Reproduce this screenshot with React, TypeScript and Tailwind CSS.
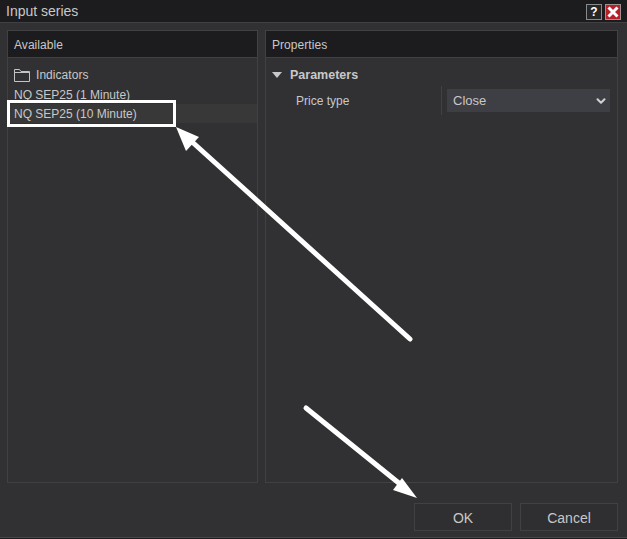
import React from 'react';
import { ChevronDown } from 'lucide-react';

const Panel: React.FC<{ title: string; className: string; children: React.ReactNode }> = ({ title, className, children }) => (
  <section className={`flex flex-col border border-[#414143] ${className}`}>
    <header className="flex h-[27px] items-center border-b border-[#414143] bg-[#1c1c1e] px-[6px] pt-px text-[12px] tracking-[0.05px] text-[#c8c8c8]">{title}</header>
    {children}
  </section>
);

const FolderIcon = () => (
  <svg width="16" height="14" viewBox="0 0 16 14" fill="none" stroke="#c4c4c4" strokeWidth="1">
    <path d="M0.5 13.5V1.5H5.5L7 3.5H15.5V13.5Z" />
    <path d="M0.5 4.5H15.5" />
  </svg>
);

const App: React.FC = () => {
  return (
    <div className="relative flex h-[539px] w-[627px] flex-col overflow-hidden bg-[#313133] font-['Liberation_Sans',Arial,sans-serif]">
      <div className="flex h-[23px] shrink-0 items-center justify-between border-b border-[#414143] bg-[#1c1c1e] px-[6px] text-[14px] text-[#c8c8c8]">
        <span>Input series</span>
        <div className="flex gap-[3px] pt-px">
          <span className="flex h-[16px] w-[16px] items-center justify-center border border-[#8a8a8a] bg-[#262626] text-[12px] font-bold text-white">?</span>
          <span className="flex h-[16px] w-[16px] items-center justify-center border border-[#a09090] bg-[#b5202a]">
            <svg width="12" height="12" viewBox="0 0 12 12" stroke="#fff" strokeWidth="3"><path d="M1.5 1.5L10.5 10.5M10.5 1.5L1.5 10.5" /></svg>
          </span>
        </div>
      </div>

      <div className="mt-[7px] flex h-[453px] gap-[7px] pl-[7px] pr-[9px]">
        <Panel title="Available" className="w-[251px]">
          <div className="pt-[7px] text-[12px] text-[#c8c8c8]">
            <div className="mb-px flex h-[19px] items-center gap-[6px] px-[6px]">
              <FolderIcon />
              <span className="tracking-[0.05px]">Indicators</span>
            </div>
            <div className="flex h-[19px] items-center px-[6px]">NQ SEP25 (1 Minute)</div>
            <div className="flex h-[19px] items-center bg-[#383839] px-[6px]">NQ SEP25 (10 Minute)</div>
          </div>
        </Panel>
        <Panel title="Properties" className="flex-1">
          <div className="pt-[7px] text-[12px] text-[#c8c8c8]">
            <div className="flex h-[20px] items-center gap-[8px] pl-[6px] text-[12.5px] font-bold">
              <svg width="10" height="6" viewBox="0 0 10 6" fill="#c8c8c8"><path d="M0 0H10L5 6Z" /></svg>
              <span>Parameters</span>
            </div>
            <div className="mt-px flex h-[29px] items-center pl-[30px]">
              <span className="w-[145px]">Price type</span>
              <div className="flex h-[29px] items-center border-l border-[#414143] py-[3px] pl-[5px] pr-[6px]">
                <div className="flex h-[23px] w-[163px] items-center justify-between bg-[#3e3e45] pl-[6px] pr-[2px] text-[13px]">
                  <span>Close</span>
                  <ChevronDown size={14} strokeWidth={3.5} color="#d0d0d0" />
                </div>
              </div>
            </div>
          </div>
        </Panel>
      </div>

      <div className="mt-[20px] flex justify-end gap-[8px] pr-[9px]">
        <button className="h-[28px] w-[98px] border border-[#414143] bg-[#2f2f31] pt-[2px] text-[14px] text-[#c8c8c8]">OK</button>
        <button className="h-[28px] w-[98px] border border-[#414143] bg-[#2f2f31] pt-[2px] text-[14px] text-[#c8c8c8]">Cancel</button>
      </div>
      <div className="mt-auto h-[2px] border-t border-[#47474a] bg-[#1c1c1e]" />

      {/* annotation overlay */}
      <div className="absolute left-[7px] top-[100px] h-[27px] w-[169px] border-[3px] border-white" />
      <svg className="absolute left-0 top-0" width="627" height="539" viewBox="0 0 627 539" fill="none">
        <path d="M410 339L190 140" stroke="#fff" strokeWidth="5" strokeLinecap="round" />
        <path d="M176 127L199 137L186 151Z" fill="#fff" />
        <path d="M306 408L400 484" stroke="#fff" strokeWidth="5" strokeLinecap="round" />
        <path d="M417 498L393 490L402 478Z" fill="#fff" />
      </svg>
    </div>
  );
};

export default App;
